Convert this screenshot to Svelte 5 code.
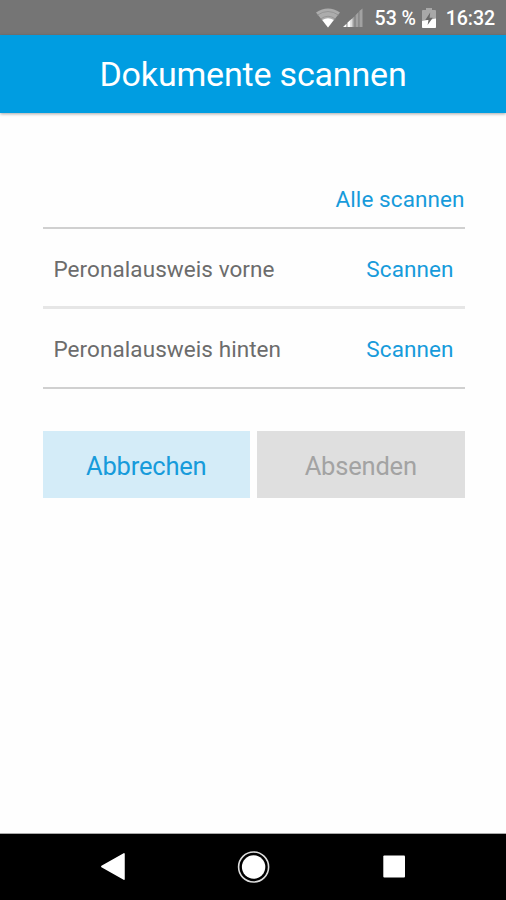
<script>
	let documents = [
		{ id: 1, name: 'Peronalausweis vorne' },
		{ id: 2, name: 'Peronalausweis hinten' }
	];
	let scanned = [];

	const scan = function(id){
		if(scanned.includes(id)) return;
		scanned = [...scanned, id]
	}
	const scanAll = function(){
		scanned = documents.map((item) => item.id)
	}
	const cancel = function(){
		scanned = []
	}
</script>

<div class="screen">
	<div class="statusBar">
		<svg class="wifi" width="24" height="20" viewBox="0 0 24 20">
			<path d="M0 4.5 Q12 -3.5 24 4.5 L12 19.5 Z" fill="#acacac" />
			<path d="M1.5 7 Q12 0 22.5 7 M4.5 11 Q12 5.5 19.5 11" fill="none" stroke="#8f8f8f" stroke-width="0.8" />
			<path d="M6.3 12 Q12 8.3 17.7 12 L12 19.5 Z" fill="#fff" />
		</svg>
		<svg class="signal" width="20" height="20" viewBox="0 0 20 20">
			<path d="M8.5 11 L11.5 8.3 V19 H8.5 Z M12.5 7.2 L15.5 4 V19 H12.5 Z M16.4 3 L19.5 0.5 V19 H16.4 Z" fill="#a2a2a2" />
			<path d="M0 19 L3.5 15.7 V19 Z M4.4 14.8 L7.8 11.6 V19 H4.4 Z" fill="#fff" />
			<path d="M8.3 11.4 L9.3 10.4 V19 H8.3 Z" fill="#fff" />
		</svg>
		<span class="percent">53 %</span>
		<svg class="battery" width="14" height="20" viewBox="0 0 14 20">
			<path d="M4 0 H10 V2 H13 Q14 2 14 3 V19 Q14 20 13 20 H1 Q0 20 0 19 V3 Q0 2 1 2 H4 Z" fill="#a8a8a8" />
			<path d="M0 13 L14 10.5 V19 Q14 20 13 20 H1 Q0 20 0 19 Z" fill="#fff" />
			<path d="M8.2 4.5 L3.3 12 H6.5 L5.6 17 L10.8 9.7 H7.6 Z" fill="#686868" />
		</svg>
		<span class="clock">16:32</span>
	</div>

	<header>
		<h1>Dokumente scannen</h1>
	</header>

	<main>
		<div class="allRow">
			<button class="link" on:click={scanAll}>Alle scannen</button>
		</div>
		{#each documents as item (item.id)}
			<div class="row">
				<span>{item.name}</span>
				<button class="link" on:click={() => scan(item.id)}>Scannen</button>
			</div>
		{/each}
		<div class="actions">
			<button class="cancel" on:click={cancel}>Abbrechen</button>
			<button class="send" disabled={scanned.length < documents.length}>Absenden</button>
		</div>
	</main>

	<nav>
		<svg width="34" height="34" viewBox="0 0 34 34">
			<path d="M5.8 16.5 L28 3.8 V29.2 Z" fill="#fff" stroke="#fff" stroke-width="1.5" stroke-linejoin="round" />
		</svg>
		<svg width="34" height="34" viewBox="0 0 34 34">
			<circle cx="16.6" cy="17" r="15" fill="none" stroke="#dedede" stroke-width="1.6" />
			<circle cx="16.6" cy="17" r="11.7" fill="#fff" />
		</svg>
		<svg width="34" height="34" viewBox="0 0 34 34">
			<rect x="6.3" y="5.6" width="21.7" height="22" rx="1" fill="#fff" />
		</svg>
	</nav>
</div>

<style>
	:global(body){
		background: #fefefe;
	}
	.screen{
		display: flex;
		flex-direction: column;
		height: 900px;
		font-family: Roboto, sans-serif;
	}
	.statusBar{
		display: flex;
		align-items: center;
		justify-content: flex-end;
		box-sizing: border-box;
		height: 34.6px;
		padding: 2px 11px 0 0;
		background: #757575;
		color: #fff;
		font-size: 19.6px;
		font-weight: 500;
		letter-spacing: -0.1px;
	}
	.signal{
		margin-left: 3px;
	}
	.percent{
		margin-left: 12px;
	}
	.battery{
		margin-left: 6px;
	}
	.clock{
		margin-left: 10px;
	}
	header{
		display: flex;
		align-items: center;
		justify-content: center;
		height: 78.4px;
		background: #009de1;
		box-shadow: 0 1px 3px rgba(0, 0, 0, 0.35);
	}
	h1{
		margin: 0;
		color: #fff;
		font-size: 34px;
		font-weight: 400;
		letter-spacing: -0.18px;
	}
	main{
		flex: 1;
		padding: 57px 41.5px 0 42.5px;
	}
	button{
		border: none;
		padding: 0;
		font-family: inherit;
		cursor: pointer;
	}
	.link{
		background: none;
		color: #179bdb;
		font-size: 22.5px;
		letter-spacing: 0.08px;
	}
	.allRow{
		display: flex;
		align-items: center;
		justify-content: flex-end;
		box-sizing: border-box;
		height: 59px;
		padding-top: 2px;
		border-bottom: 2px solid #d0d0d0;
	}
	.row{
		display: flex;
		align-items: center;
		justify-content: space-between;
		box-sizing: border-box;
		height: 80px;
		padding: 2px 11px 0;
		border-bottom: 2px solid #d0d0d0;
		color: #6c6c6c;
		font-size: 22.5px;
		letter-spacing: 0.07px;
	}
	.row:nth-child(2){
		padding-top: 4px;
		border-bottom: 3px solid #e6e6e6;
	}
	.actions{
		display: grid;
		grid-template-columns: 1fr 1fr;
		gap: 7px;
		margin-top: 42px;
	}
	.actions button{
		height: 67px;
		padding-top: 3px;
		font-size: 25.5px;
		letter-spacing: -0.2px;
	}
	.cancel{
		background: #d4ecf8;
		color: #179bdb;
	}
	.send{
		background: #dfdfdf;
		color: #a3a3a3;
	}
	nav{
		display: flex;
		align-items: center;
		justify-content: space-between;
		box-sizing: border-box;
		height: 67px;
		padding: 0 95px 0 96px;
		border-top: 1px solid #aaa;
		background: #000;
	}
</style>
